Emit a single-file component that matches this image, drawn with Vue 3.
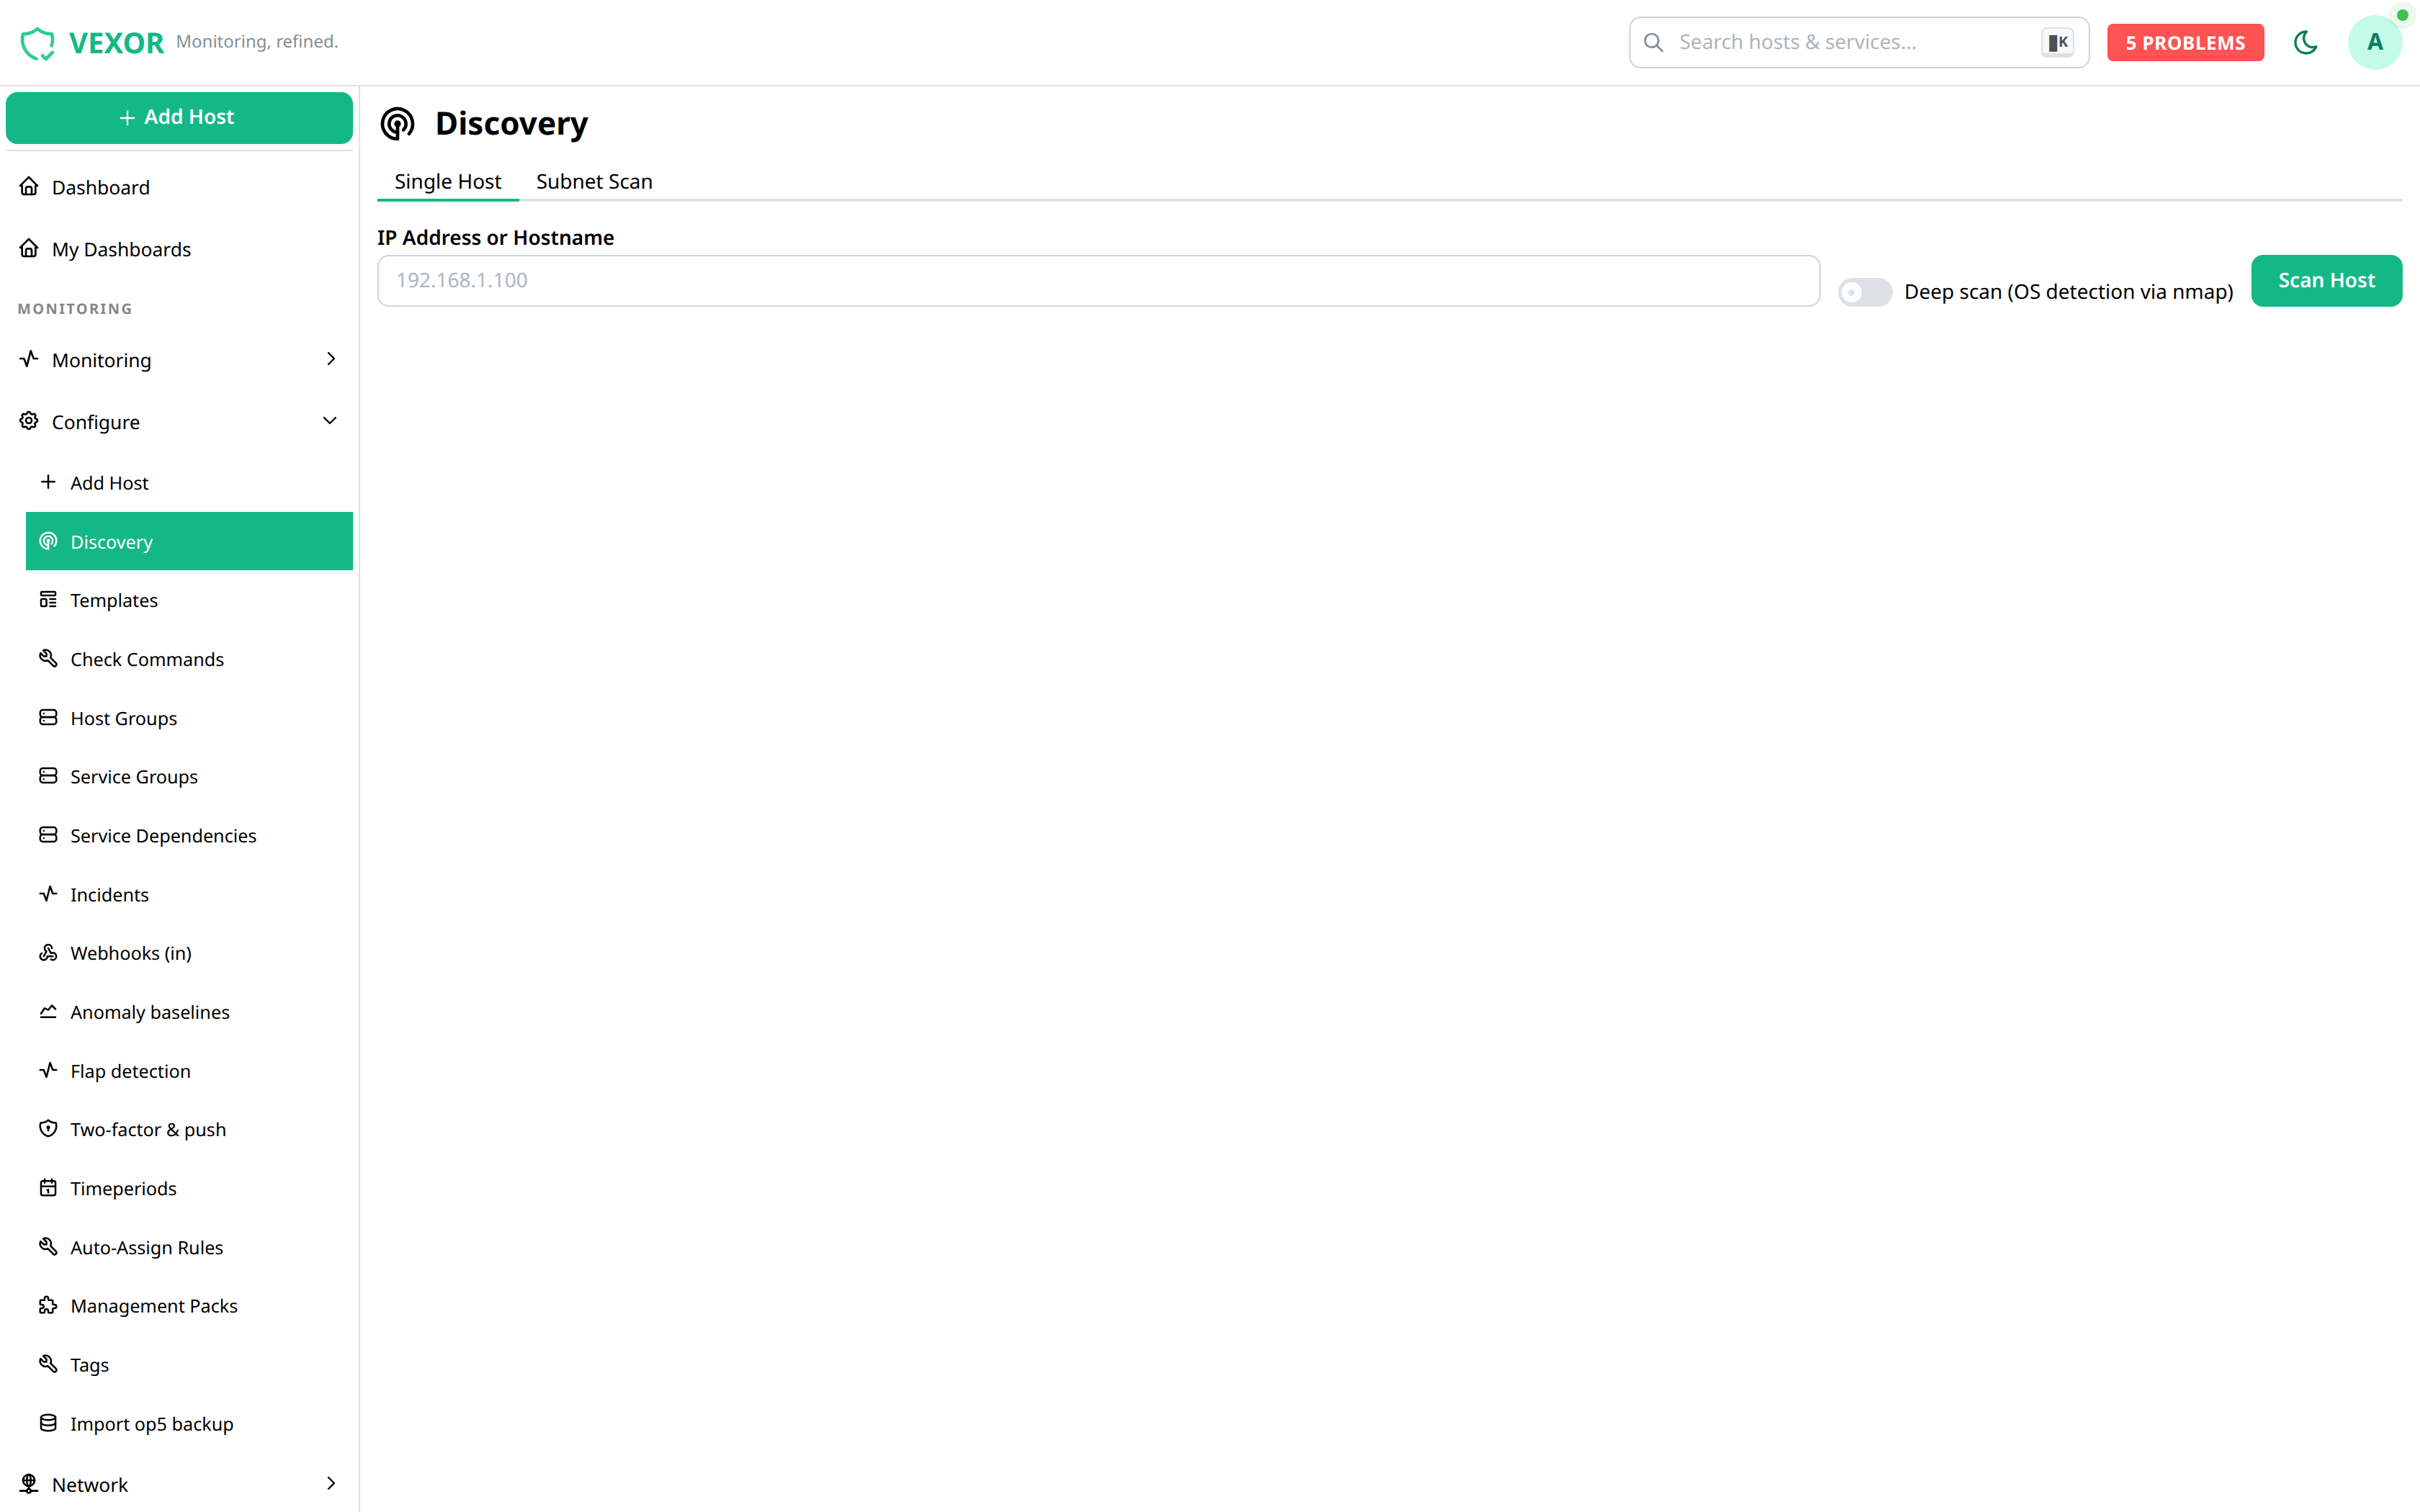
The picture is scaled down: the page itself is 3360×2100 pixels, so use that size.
<script setup>
const ICONS = {
  home: ['M5 12l-2 0l9 -9l9 9l-2 0', 'M5 12v7a2 2 0 0 0 2 2h10a2 2 0 0 0 2 -2v-7', 'M9 21v-6a2 2 0 0 1 2 -2h2a2 2 0 0 1 2 2v6'],
  activity: ['M3 12h4l3 8l4 -16l3 8h4'],
  settings: ['M10.325 4.317c.426 -1.756 2.924 -1.756 3.35 0a1.724 1.724 0 0 0 2.573 1.066c1.543 -.94 3.31 .826 2.37 2.37a1.724 1.724 0 0 0 1.065 2.572c1.756 .426 1.756 2.924 0 3.35a1.724 1.724 0 0 0 -1.066 2.573c.94 1.543 -.826 3.31 -2.37 2.37a1.724 1.724 0 0 0 -2.572 1.065c-.426 1.756 -2.924 1.756 -3.35 0a1.724 1.724 0 0 0 -2.573 -1.066c-1.543 .94 -3.31 -.826 -2.37 -2.37a1.724 1.724 0 0 0 -1.065 -2.572c-1.756 -.426 -1.756 -2.924 0 -3.35a1.724 1.724 0 0 0 1.066 -2.573c-.94 -1.543 .826 -3.31 2.37 -2.37c1 .608 2.296 .07 2.572 -1.065z', 'M9 12a3 3 0 1 0 6 0a3 3 0 0 0 -6 0'],
  plus: ['M12 5l0 14', 'M5 12l14 0'],
  radar: ['M12 12m-1 0a1 1 0 1 0 2 0a1 1 0 1 0 -2 0', 'M15.51 15.56a5 5 0 1 0 -3.51 1.44', 'M18.832 17.86a9 9 0 1 0 -6.832 3.14', 'M12 12v9'],
  template: ['M4 4m0 1a1 1 0 0 1 1 -1h14a1 1 0 0 1 1 1v2a1 1 0 0 1 -1 1h-14a1 1 0 0 1 -1 -1z', 'M4 12m0 1a1 1 0 0 1 1 -1h4a1 1 0 0 1 1 1v6a1 1 0 0 1 -1 1h-4a1 1 0 0 1 -1 -1z', 'M14 12l6 0', 'M14 16l6 0', 'M14 20l6 0'],
  tool: ['M7 10h3v-3l-3.5 -3.5a6 6 0 0 1 8 8l6 6a2 2 0 0 1 -3 3l-6 -6a6 6 0 0 1 -8 -8l3.5 3.5'],
  server: ['M3 4m0 3a3 3 0 0 1 3 -3h12a3 3 0 0 1 3 3v2a3 3 0 0 1 -3 3h-12a3 3 0 0 1 -3 -3z', 'M3 12m0 3a3 3 0 0 1 3 -3h12a3 3 0 0 1 3 3v2a3 3 0 0 1 -3 3h-12a3 3 0 0 1 -3 -3z', 'M7 8l0 .01', 'M7 16l0 .01'],
  webhook: ['M4.876 13.61a4 4 0 1 0 6.124 3.39h6', 'M15.066 20.502a4 4 0 1 0 1.934 -7.502c-.706 0 -1.424 .179 -2 .5l-3 -5.5', 'M16 8a4 4 0 1 0 -8 0c0 1.506 .77 2.818 2 3.5l-3 5.5'],
  chart: ['M4 19l16 0', 'M4 15l4 -6l4 2l4 -5l4 4'],
  shieldLock: ['M12 3a12 12 0 0 0 8.5 3a12 12 0 0 1 -8.5 15a12 12 0 0 1 -8.5 -15a12 12 0 0 0 8.5 -3', 'M12 11m-1 0a1 1 0 1 0 2 0a1 1 0 1 0 -2 0', 'M12 12l0 2.5'],
  calendar: ['M4 7a2 2 0 0 1 2 -2h12a2 2 0 0 1 2 2v12a2 2 0 0 1 -2 2h-12a2 2 0 0 1 -2 -2v-12z', 'M16 3v4', 'M8 3v4', 'M4 11h16', 'M11 15h1', 'M12 15v3'],
  puzzle: ['M4 7h3a1 1 0 0 0 1 -1v-1a2 2 0 0 1 4 0v1a1 1 0 0 0 1 1h3a1 1 0 0 1 1 1v3a1 1 0 0 0 1 1h1a2 2 0 0 1 0 4h-1a1 1 0 0 0 -1 1v3a1 1 0 0 1 -1 1h-3a1 1 0 0 1 -1 -1v-1a2 2 0 0 0 -4 0v1a1 1 0 0 1 -1 1h-3a1 1 0 0 1 -1 -1v-3a1 1 0 0 1 1 -1h1a2 2 0 0 0 0 -4h-1a1 1 0 0 1 -1 -1v-3a1 1 0 0 1 1 -1'],
  database: ['M12 6m-8 0a8 3 0 1 0 16 0a8 3 0 1 0 -16 0', 'M4 6v6a8 3 0 0 0 16 0v-6', 'M4 12v6a8 3 0 0 0 16 0v-6'],
  network: ['M6 9a6 6 0 1 0 12 0a6 6 0 0 0 -12 0', 'M12 3c1.333 .333 2 2.333 2 6s-.667 5.667 -2 6', 'M12 3c-1.333 .333 -2 2.333 -2 6s.667 5.667 2 6', 'M6 9h12', 'M3 20h7', 'M14 20h7', 'M10 20a2 2 0 1 0 4 0a2 2 0 0 0 -4 0', 'M12 15v3'],
  right: ['M9 6l6 6l-6 6'],
  down: ['M6 9l6 6l6 -6'],
  search: ['M10 10m-7 0a7 7 0 1 0 14 0a7 7 0 1 0 -14 0', 'M21 21l-6 -6'],
  moon: ['M12 3c.132 0 .263 0 .393 0a7.5 7.5 0 0 0 7.92 12.446a9 9 0 1 1 -8.313 -12.454z'],
  shieldCheck: ['M11.46 20.846a12 12 0 0 1 -7.96 -14.846a12 12 0 0 0 8.5 -3a12 12 0 0 0 8.5 3a12 12 0 0 1 -.09 7.06', 'M15 19l2 2l4 -4'],
}

const subItems = [
  { label: 'Add Host', icon: 'plus' },
  { label: 'Discovery', icon: 'radar', active: true },
  { label: 'Templates', icon: 'template' },
  { label: 'Check Commands', icon: 'tool' },
  { label: 'Host Groups', icon: 'server' },
  { label: 'Service Groups', icon: 'server' },
  { label: 'Service Dependencies', icon: 'server' },
  { label: 'Incidents', icon: 'activity' },
  { label: 'Webhooks (in)', icon: 'webhook' },
  { label: 'Anomaly baselines', icon: 'chart' },
  { label: 'Flap detection', icon: 'activity' },
  { label: 'Two-factor & push', icon: 'shieldLock' },
  { label: 'Timeperiods', icon: 'calendar' },
  { label: 'Auto-Assign Rules', icon: 'tool' },
  { label: 'Management Packs', icon: 'puzzle' },
  { label: 'Tags', icon: 'tool' },
  { label: 'Import op5 backup', icon: 'database' },
]
</script>

<template>
  <div class="app">
    <header class="header">
      <div class="brand">
        <svg class="ic logo-ic" viewBox="0 0 24 24"><path v-for="d in ICONS.shieldCheck" :key="d" :d="d" /></svg>
        <span class="logo-text">VEXOR</span>
        <span class="tagline">Monitoring, refined.</span>
      </div>
      <div class="header-right">
        <div class="search">
          <svg class="ic search-ic" viewBox="0 0 24 24"><path v-for="d in ICONS.search" :key="d" :d="d" /></svg>
          <input class="search-input" placeholder="Search hosts &amp; services..." />
          <span class="kbd"><span class="kbd-mark">▮</span>K</span>
        </div>
        <span class="badge">5 PROBLEMS</span>
        <span class="theme-btn">
          <svg class="ic moon-ic" viewBox="0 0 24 24"><path v-for="d in ICONS.moon" :key="d" :d="d" /></svg>
        </span>
        <span class="avatar">A<span class="dot"></span></span>
      </div>
    </header>

    <div class="body">
      <nav class="navbar">
        <button class="add-btn">
          <svg class="ic add-ic" viewBox="0 0 24 24"><path v-for="d in ICONS.plus" :key="d" :d="d" /></svg>
          Add Host
        </button>
        <div class="nav-divider"></div>

        <a class="row top">
          <svg class="ic top-ic" viewBox="0 0 24 24"><path v-for="d in ICONS.home" :key="d" :d="d" /></svg>
          <span>Dashboard</span>
        </a>
        <a class="row top">
          <svg class="ic top-ic" viewBox="0 0 24 24"><path v-for="d in ICONS.home" :key="d" :d="d" /></svg>
          <span>My Dashboards</span>
        </a>

        <div class="section">MONITORING</div>

        <a class="row top">
          <svg class="ic top-ic" viewBox="0 0 24 24"><path v-for="d in ICONS.activity" :key="d" :d="d" /></svg>
          <span>Monitoring</span>
          <svg class="ic chev chev-right" viewBox="0 0 24 24"><path v-for="d in ICONS.right" :key="d" :d="d" /></svg>
        </a>
        <a class="row top">
          <svg class="ic top-ic" viewBox="0 0 24 24"><path v-for="d in ICONS.settings" :key="d" :d="d" /></svg>
          <span>Configure</span>
          <svg class="ic chev" viewBox="0 0 24 24"><path v-for="d in ICONS.down" :key="d" :d="d" /></svg>
        </a>

        <div class="sub-list">
          <a v-for="item in subItems" :key="item.label" class="row sub" :class="{ active: item.active }">
            <svg class="ic sub-ic" viewBox="0 0 24 24"><path v-for="d in ICONS[item.icon]" :key="d" :d="d" /></svg>
            <span>{{ item.label }}</span>
          </a>
        </div>

        <a class="row top last">
          <svg class="ic top-ic" viewBox="0 0 24 24"><path v-for="d in ICONS.network" :key="d" :d="d" /></svg>
          <span>Network</span>
          <svg class="ic chev chev-right" viewBox="0 0 24 24"><path v-for="d in ICONS.right" :key="d" :d="d" /></svg>
        </a>
      </nav>

      <main class="main">
        <div class="title-row">
          <svg class="ic title-ic" viewBox="0 0 24 24"><path v-for="d in ICONS.radar" :key="d" :d="d" /></svg>
          <h1 class="title">Discovery</h1>
        </div>

        <div class="tabs">
          <span class="tab active">Single Host</span>
          <span class="tab">Subnet Scan</span>
        </div>

        <div class="form">
          <div class="field">
            <label class="label">IP Address or Hostname</label>
            <input class="input" placeholder="192.168.1.100" />
          </div>
          <div class="deep">
            <span class="switch"><span class="thumb"></span></span>
            <span class="deep-text">Deep scan (OS detection via nmap)</span>
          </div>
          <button class="scan-btn">Scan Host</button>
        </div>
      </main>
    </div>
  </div>
</template>

<style>
html, body { margin: 0; padding: 0; background: #fff; overflow: hidden; }
</style>

<style scoped>
.app {
  width: 3360px;
  height: 2100px;
  overflow: hidden;
  display: flex;
  flex-direction: column;
  font-family: "Noto Sans", sans-serif;
  color: #000;
  background: #fff;
  text-rendering: geometricPrecision;
}
.ic {
  fill: none;
  stroke: currentColor;
  stroke-width: 2;
  stroke-linecap: round;
  stroke-linejoin: round;
  flex: none;
  display: block;
}

/* header */
.header {
  height: 118px;
  flex: none;
  box-sizing: content-box;
  border-bottom: 2px solid #dee2e6;
  display: flex;
  align-items: center;
  justify-content: space-between;
  padding: 0 24px;
}
.brand { display: flex; align-items: center; }
.logo-ic { width: 56px; height: 56px; color: #2ecb98; margin-left: 0; margin-top: 4px; }
.logo-text {
  font-size: 40px;
  font-weight: 700;
  line-height: 56px;
  color: #14b886;
  margin-left: 16px;
}
.tagline {
  font-size: 24px;
  line-height: 36px;
  color: #868e96;
  margin-left: 16px;
  margin-top: -2px;
}
.header-right { display: flex; align-items: center; }
.search {
  width: 640px;
  height: 72px;
  box-sizing: border-box;
  border: 2px solid #ced4da;
  border-radius: 16px;
  display: flex;
  align-items: center;
  padding: 0 20px 0 16px;
}
.search-ic { width: 32px; height: 32px; color: #868e96; }
.search-input {
  flex: 1;
  min-width: 0;
  border: 0;
  outline: 0;
  padding: 0 0 2px;
  margin-left: 20px;
  background: transparent;
  font: 28px "Noto Sans", sans-serif;
  text-rendering: geometricPrecision;
}
.search-input::placeholder { color: #adb5bd; opacity: 1; }
.kbd {
  width: 46px;
  height: 42px;
  box-sizing: border-box;
  flex: none;
  background: #f8f9fa;
  border: 2px solid #dee2e6;
  border-bottom-width: 6px;
  border-radius: 8px;
  display: flex;
  align-items: center;
  justify-content: center;
  font-size: 20px;
  font-weight: 700;
  color: #495057;
}
.kbd-mark { font-size: 30px; line-height: 20px; font-weight: 400; margin-right: -1px; }
.badge {
  margin-left: 24px;
  width: 218px;
  height: 52px;
  display: flex;
  align-items: center;
  justify-content: center;
  background: #ff5252;
  border-radius: 8px;
  color: #fff;
  font-size: 26px;
  font-weight: 700;
  letter-spacing: 0.6px;
}
.theme-btn {
  width: 56px;
  height: 56px;
  margin: 0 30px;
  display: flex;
  align-items: center;
  justify-content: center;
}
.moon-ic { width: 40px; height: 40px; color: #087f5b; }
.avatar {
  position: relative;
  width: 76px;
  height: 76px;
  box-sizing: border-box;
  padding-bottom: 3px;
  border-radius: 50%;
  background: #c3fae8;
  color: #087f5b;
  font-size: 32px;
  font-weight: 700;
  display: flex;
  align-items: center;
  justify-content: center;
}
.dot {
  position: absolute;
  top: -8px;
  left: 68px;
  width: 16px;
  height: 16px;
  border-radius: 50%;
  background: #40c057;
  box-shadow: 0 0 0 11px rgba(64, 192, 87, 0.1);
}

/* body */
.body { flex: 1; min-height: 0; display: flex; }
.navbar {
  width: 500px;
  flex: none;
  box-sizing: border-box;
  border-right: 2px solid #dee2e6;
  padding: 8px 8px 0;
  overflow: hidden;
}
.add-btn {
  width: 482px;
  height: 72px;
  border: 0;
  border-radius: 16px;
  background: #14b886;
  color: #fff;
  display: flex;
  align-items: center;
  justify-content: center;
  padding: 0 12px 4px 0;
  font: 600 28px "Noto Sans", sans-serif;
  text-rendering: geometricPrecision;
}
.add-ic { width: 32px; height: 32px; stroke-width: 1.75; margin-right: 8px; margin-top: 4px; }
.nav-divider { width: 482px; height: 2px; background: #dee2e6; margin: 8px 0 7px; }
.row {
  display: flex;
  align-items: center;
  width: 482px;
  box-sizing: border-box;
  color: #000;
}
.row.top { height: 86px; padding: 0 16px; font-size: 26.4px; gap: 16px; }
.row.top.last { padding-top: 2px; }
.top-ic { width: 32px; height: 32px; margin-top: -4px; }
.chev { width: 32px; height: 32px; margin-left: auto; margin-top: -4px; stroke-width: 1.75; }
.chev-right { margin-right: -2px; }
.section {
  height: 68px;
  box-sizing: border-box;
  padding: 28px 0 0 16px;
  font-size: 20px;
  line-height: 24px;
  font-weight: 700;
  letter-spacing: 2.4px;
  color: #868686;
}
.sub-list { margin-left: 28px; }
.row.sub {
  width: 454px;
  height: 81.7px;
  padding: 2px 16px 0;
  font-size: 25.2px;
  gap: 16px;
}
.sub-ic { width: 30px; height: 30px; margin-top: -4px; }
.row.sub.active { background: #14b886; color: #fff; }

/* main */
.main { flex: 1; min-width: 0; padding: 24px; box-sizing: border-box; }
.title-row { display: flex; align-items: center; height: 56px; gap: 24px; }
.title-ic { width: 56px; height: 56px; }
.title {
  margin: -4px 0 0;
  font-size: 44px;
  line-height: 56px;
  font-weight: 700;
}
.tabs {
  margin-top: 24px;
  height: 56px;
  box-sizing: border-box;
  display: flex;
  border-bottom: 4px solid #dee2e6;
}
.tab {
  height: 56px;
  box-sizing: border-box;
  padding: 3px 24px 0;
  font-size: 28px;
  display: flex;
  align-items: center;
  border-bottom: 4px solid transparent;
}
.tab.active { border-bottom-color: #14b886; }
.form { display: flex; align-items: flex-end; gap: 24px; margin-top: 28px; }
.field { flex: 1; min-width: 0; }
.label {
  display: block;
  font-size: 28px;
  line-height: 44px;
  font-weight: 600;
  margin-bottom: 2px;
}
.input {
  display: block;
  width: 100%;
  height: 72px;
  box-sizing: border-box;
  border: 2px solid #ced4da;
  border-radius: 16px;
  outline: 0;
  padding: 0 24px 3px;
  font: 28px "Noto Sans", sans-serif;
  text-rendering: geometricPrecision;
}
.input::placeholder { color: #adb5bd; opacity: 1; }
.deep { display: flex; align-items: center; height: 40px; gap: 16px; font-size: 28px; margin-right: 1px; }
.deep-text { margin-top: -3px; }
.switch {
  width: 76px;
  height: 40px;
  border-radius: 20px;
  background: #dee2e6;
  display: flex;
  align-items: center;
  padding-left: 5px;
  box-sizing: border-box;
}
.thumb {
  width: 28px;
  height: 28px;
  border-radius: 50%;
  background: #fff;
  display: flex;
  align-items: center;
  justify-content: center;
}
.thumb::after {
  content: "";
  width: 9px;
  height: 9px;
  border-radius: 50%;
  background: #dee2e6;
}
.scan-btn {
  width: 210px;
  height: 72px;
  border: 0;
  border-radius: 16px;
  background: #14b886;
  color: #fff;
  padding: 0 0 3px;
  font: 600 28px "Noto Sans", sans-serif;
  text-rendering: geometricPrecision;
}
</style>
